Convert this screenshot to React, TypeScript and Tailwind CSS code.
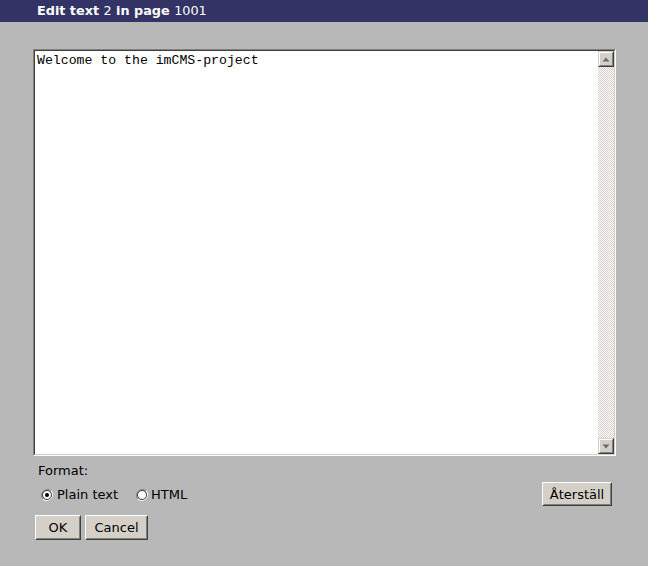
export default function App() {
  return (
    <div className="w-[648px] h-[566px] bg-[#b8b8b8] font-['DejaVu_Sans',sans-serif] text-[13px] text-black">
      <div className="h-[22px] bg-[#333366] pl-[37px] flex items-center text-white text-[12.8px] leading-none">
        <span className="font-bold whitespace-pre">Edit text </span>
        <span className="whitespace-pre">2</span>
        <span className="font-bold whitespace-pre"> in page </span>
        <span>1001</span>
      </div>

      <div className="pl-[33px] pt-[27px] w-[616px]">
        {/* textarea */}
        <div className="w-[583px] h-[407px] border border-t-[#808080] border-l-[#808080] border-b-white border-r-white">
          <div className="h-full flex border border-t-[#404040] border-l-[#404040] border-b-[#d4d0c8] border-r-[#d4d0c8] bg-white">
            <div className="flex-1 pl-[2px] pt-[2px] font-['Liberation_Mono',monospace] text-[13.2px] leading-[16px] whitespace-pre">
              Welcome to the imCMS-project
            </div>
            <div className="w-[16px] flex flex-col">
              <ScrollButton dir="up" />
              <div className="flex-1 bg-[repeating-conic-gradient(#d4d0c8_0_25%,#ffffff_0_50%)] bg-[length:2px_2px]" />
              <ScrollButton dir="down" />
            </div>
          </div>
        </div>

        <div className="pl-[5px] pt-[7px] leading-[16px]">Format:</div>

        <div className="flex items-start justify-between">
          <div className="flex items-center pl-[8px] pt-[8px] leading-[16px]">
            <Radio checked />
            <span className="ml-[4px]">Plain text</span>
            <span className="ml-[18px]">
              <Radio />
            </span>
            <span className="ml-[3px]">HTML</span>
          </div>
          <div className="pt-[3px] pr-[4px]">
            <Button className="w-[70px] h-[24px]">Återställ</Button>
          </div>
        </div>

        <div className="flex gap-[4px] pt-[9px] pl-[2px]">
          <Button className="w-[46px] h-[25px]">OK</Button>
          <Button className="w-[63px] h-[25px]">Cancel</Button>
        </div>
      </div>
    </div>
  );
}

function Button({ children, className }: { children: React.ReactNode; className?: string }) {
  return (
    <div
      className={`${className ?? ""} border border-t-white border-l-white border-b-[#404040] border-r-[#404040] bg-[#d4d0c8]`}
    >
      <div className="h-full flex items-center justify-center border border-t-[#d4d0c8] border-l-[#d4d0c8] border-b-[#808080] border-r-[#808080] text-[13px] leading-none">
        {children}
      </div>
    </div>
  );
}

function ScrollButton({ dir }: { dir: "up" | "down" }) {
  return (
    <div className="w-[16px] h-[16px] border border-t-[#d4d0c8] border-l-[#d4d0c8] border-b-[#404040] border-r-[#404040] bg-[#d4d0c8]">
      <div className="h-full flex items-center justify-center border border-t-white border-l-white border-b-[#808080] border-r-[#808080]">
        <svg width="8" height="5" viewBox="0 0 8 5">
          {dir === "up" ? (
            <path d="M4 0.5 L7.5 4.5 L0.5 4.5 Z" fill="#6b6b6b" />
          ) : (
            <path d="M0.5 0.5 L7.5 0.5 L4 4.5 Z" fill="#6b6b6b" />
          )}
        </svg>
      </div>
    </div>
  );
}

function Radio({ checked }: { checked?: boolean }) {
  return (
    <svg width="12" height="12" viewBox="0 0 12 12" className="block">
      <path d="M10.2 1.8 A6 6 0 0 0 1.8 10.2" fill="none" stroke="#808080" strokeWidth="1" />
      <path d="M1.8 10.2 A6 6 0 0 0 10.2 1.8" fill="none" stroke="#ffffff" strokeWidth="1" />
      <circle cx="6" cy="6" r="4.5" fill="#ffffff" stroke="#404040" strokeWidth="1" />
      {checked && <circle cx="6" cy="6" r="2" fill="#000000" />}
    </svg>
  );
}
